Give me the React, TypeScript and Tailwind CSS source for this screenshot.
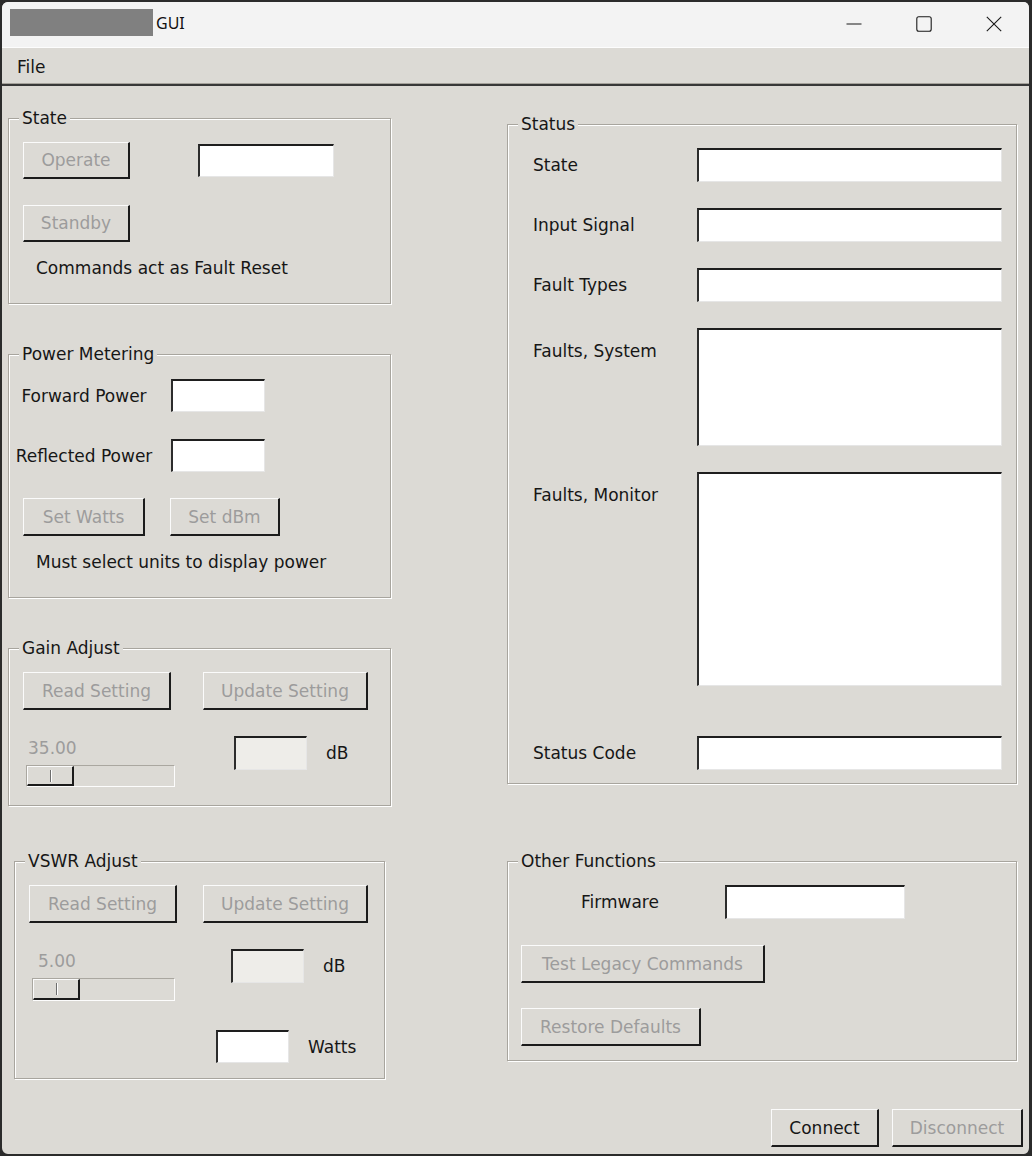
import type { ReactNode } from "react";

const ink = "text-[#161616]";
const greyed = "text-[#9c9c9c]";

type BtnProps = { children: ReactNode; className?: string; disabled?: boolean };
const Btn = ({ children, className = "", disabled = true }: BtnProps) => (
    <button
        type="button"
        className={`flex shrink-0 items-center justify-center border-t border-l border-t-[#fbfbfb] border-l-[#fbfbfb] border-r-2 border-b-2 border-r-[#1b1b1b] border-b-[#1b1b1b] bg-[#dcdad5] pt-px leading-none ${disabled ? greyed : ink} ${className}`}
    >
        {children}
    </button>
);

type EntryProps = { className?: string; disabled?: boolean };
const Entry = ({ className = "", disabled = false }: EntryProps) => (
    <div
        className={`shrink-0 border-t-2 border-l-2 border-r border-b border-t-[#1e1e1e] border-l-[#2c2c2c] border-r-[#e6e6e6] border-b-[#e6e6e6] ${disabled ? "bg-[#eeede9]" : "bg-white"} ${className}`}
    />
);

const Slider = ({ className = "" }: { className?: string }) => (
    <div className={`flex border-t border-l border-t-[#aaa7a0] border-l-[#aaa7a0] border-r border-b border-r-[#fdfdfd] border-b-[#fdfdfd] ${className}`}>
        <div className="flex w-[47px] items-center justify-center border-t border-l border-t-[#fbfbfb] border-l-[#fbfbfb] border-r-2 border-b-2 border-r-[#1b1b1b] border-b-[#1b1b1b]">
            <div className="h-[12px] w-px bg-[#6d6d6d] shadow-[1px_0_0_#ffffff]" />
        </div>
    </div>
);

type GroupProps = { title: string; className?: string; children: ReactNode };
const Group = ({ title, className = "", children }: GroupProps) => (
    <fieldset className={`border border-[#a8a59e] shadow-[inset_1px_1px_0_#ffffff,1px_1px_0_#ffffff] ${className}`}>
        <legend className="ml-[10px] bg-[#dcdad5] px-[3px] leading-[22px]">{title}</legend>
        {children}
    </fieldset>
);

type FieldProps = { label: string; boxClass: string; top?: boolean; className?: string };
const StatusField = ({ label, boxClass, top = false, className = "" }: FieldProps) => (
    <div className={`flex pl-[25px] ${top ? "items-start" : "items-center"} ${className}`}>
        <span className={`w-[164px] leading-[22px] ${top ? "mt-[12px]" : ""}`}>{label}</span>
        <Entry className={`w-[305px] ${boxClass}`} />
    </div>
);

const TitleBar = () => (
    <div className="flex h-[45px] shrink-0 bg-[#f3f3f3]">
        <div className="ml-[8px] mt-[7px] h-[27px] w-[143px] bg-[#808080]" />
        <span className="ml-[3px] mt-[10px] font-['Noto_Sans',sans-serif] text-[16px] leading-[22px] text-[#111]">GUI</span>
        <div className="ml-auto flex pb-[2px]">
            <div className="flex w-[70px] items-center justify-center">
                <svg width="16" height="16" viewBox="0 0 16 16" fill="none" stroke="#1a1a1a" strokeWidth="1.1">
                    <path d="M0.5 8h15" />
                </svg>
            </div>
            <div className="flex w-[70px] items-center justify-center">
                <svg width="16" height="16" viewBox="0 0 16 16" fill="none" stroke="#1a1a1a" strokeWidth="1.1">
                    <rect x="0.8" y="0.8" width="14.4" height="14.4" rx="2" />
                </svg>
            </div>
            <div className="flex w-[70px] items-center justify-center">
                <svg width="16" height="16" viewBox="0 0 16 16" fill="none" stroke="#1a1a1a" strokeWidth="1.1">
                    <path d="M0.8 0.8l14.4 14.4M15.2 0.8L0.8 15.2" />
                </svg>
            </div>
        </div>
    </div>
);

export default function App() {
    return (
        <div className="h-[1156px] w-[1032px] bg-[#2b2b2b]">
            <div className={`flex h-full w-full flex-col overflow-hidden rounded-[8px] border-2 border-r-[3px] border-[#2b2b2b] bg-[#dcdad5] font-['DejaVu_Sans',sans-serif] text-[17px] ${ink}`}>
                <TitleBar />

                {/* menu */}
                <div className="flex h-[39px] shrink-0 items-center border-t border-t-[#fdfdfd] border-b-2 border-b-[#383838] pl-[15px] pt-[1px] shadow-[inset_0_-1px_0_#a5a29b]">
                    <span className="leading-[22px]">File</span>
                </div>

                <div className="flex flex-1">
                    {/* left column */}
                    <div className="flex w-[503px] flex-col">
                        <Group title="State" className="ml-[6px] mt-[21px] w-[383px] pb-[24px]">
                            <div className="mt-[13px] flex items-center pl-[14px]">
                                <Btn className="h-[37px] w-[107px]">Operate</Btn>
                                <Entry className="ml-[68px] h-[33px] w-[136px]" />
                            </div>
                            <div className="mt-[26px] flex pl-[14px]">
                                <Btn className="h-[37px] w-[107px]">Standby</Btn>
                            </div>
                            <p className="mt-[15px] pl-[27px] leading-[22px]">Commands act as Fault Reset</p>
                        </Group>

                        <Group title="Power Metering" className="ml-[6px] mt-[39px] w-[383px] pb-[24px]">
                            <div className="mt-[14px] flex items-center">
                                <span className="w-[150px] text-center leading-[22px]">Forward Power</span>
                                <Entry className="ml-[12px] h-[33px] w-[94px]" />
                            </div>
                            <div className="mt-[27px] flex items-center">
                                <span className="w-[150px] text-center leading-[22px]">Reflected Power</span>
                                <Entry className="ml-[12px] h-[33px] w-[94px]" />
                            </div>
                            <div className="mt-[26px] flex gap-[25px] pl-[14px]">
                                <Btn className="h-[38px] w-[122px]">Set Watts</Btn>
                                <Btn className="h-[38px] w-[110px]">Set dBm</Btn>
                            </div>
                            <p className="mt-[15px] pl-[27px] leading-[22px]">Must select units to display power</p>
                        </Group>

                        <Group title="Gain Adjust" className="ml-[6px] mt-[39px] w-[383px] pb-[18px]">
                            <div className="mt-[13px] flex gap-[32px] pl-[14px]">
                                <Btn className="h-[38px] w-[148px]">Read Setting</Btn>
                                <Btn className="h-[38px] w-[165px]">Update Setting</Btn>
                            </div>
                            <div className="mt-[26px] flex items-start pl-[17px]">
                                <div className="flex flex-col">
                                    <span className={`mt-px pl-[2px] leading-[22px] ${greyed}`}>35.00</span>
                                    <Slider className="mt-[6px] h-[22px] w-[149px]" />
                                </div>
                                <div className="flex items-center">
                                    <Entry disabled className="ml-[59px] h-[34px] w-[73px]" />
                                    <span className="ml-[19px] leading-[22px]">dB</span>
                                </div>
                            </div>
                        </Group>

                        <Group title="VSWR Adjust" className="ml-[12px] mt-[44px] w-[371px] pb-[15px]">
                            <div className="mt-[13px] flex gap-[26px] pl-[14px]">
                                <Btn className="h-[38px] w-[148px]">Read Setting</Btn>
                                <Btn className="h-[38px] w-[165px]">Update Setting</Btn>
                            </div>
                            <div className="mt-[26px] flex items-start pl-[17px]">
                                <div className="flex flex-col">
                                    <span className={`mt-px pl-[6px] leading-[22px] ${greyed}`}>5.00</span>
                                    <Slider className="mt-[6px] h-[23px] w-[143px]" />
                                </div>
                                <div className="flex items-center">
                                    <Entry disabled className="ml-[56px] h-[34px] w-[73px]" />
                                    <span className="ml-[19px] leading-[22px]">dB</span>
                                </div>
                            </div>
                            <div className="mt-[29px] flex items-center pl-[201px]">
                                <Entry className="h-[33px] w-[73px]" />
                                <span className="ml-[19px] leading-[22px]">Watts</span>
                            </div>
                        </Group>
                    </div>

                    {/* right column */}
                    <div className="flex flex-1 flex-col">
                        <Group title="Status" className="ml-[2px] mt-[27px] w-[510px] pb-[13px]">
                            <StatusField label="State" boxClass="h-[34px]" className="mt-[13px]" />
                            <StatusField label="Input Signal" boxClass="h-[34px]" className="mt-[26px]" />
                            <StatusField label="Fault Types" boxClass="h-[34px]" className="mt-[26px]" />
                            <StatusField label="Faults, System" boxClass="h-[118px]" top className="mt-[26px]" />
                            <StatusField label="Faults, Monitor" boxClass="h-[214px]" top className="mt-[26px]" />
                            <StatusField label="Status Code" boxClass="h-[34px]" className="mt-[50px]" />
                        </Group>

                        <Group title="Other Functions" className="ml-[2px] mt-[66px] w-[510px] pb-[14px]">
                            <div className="mt-[13px] flex items-center">
                                <span className="ml-[73px] w-[144px] leading-[22px]">Firmware</span>
                                <Entry className="h-[34px] w-[180px]" />
                            </div>
                            <div className="mt-[26px] flex pl-[13px]">
                                <Btn className="h-[38px] w-[244px]">Test Legacy Commands</Btn>
                            </div>
                            <div className="mt-[25px] flex pl-[13px]">
                                <Btn className="h-[38px] w-[180px]">Restore Defaults</Btn>
                            </div>
                        </Group>

                        <div className="mt-auto flex justify-end gap-[13px] pb-[7px] pr-[6px]">
                            <Btn disabled={false} className="h-[38px] w-[108px]">Connect</Btn>
                            <Btn className="h-[38px] w-[131px]">Disconnect</Btn>
                        </div>
                    </div>
                </div>
            </div>
        </div>
    );
}
